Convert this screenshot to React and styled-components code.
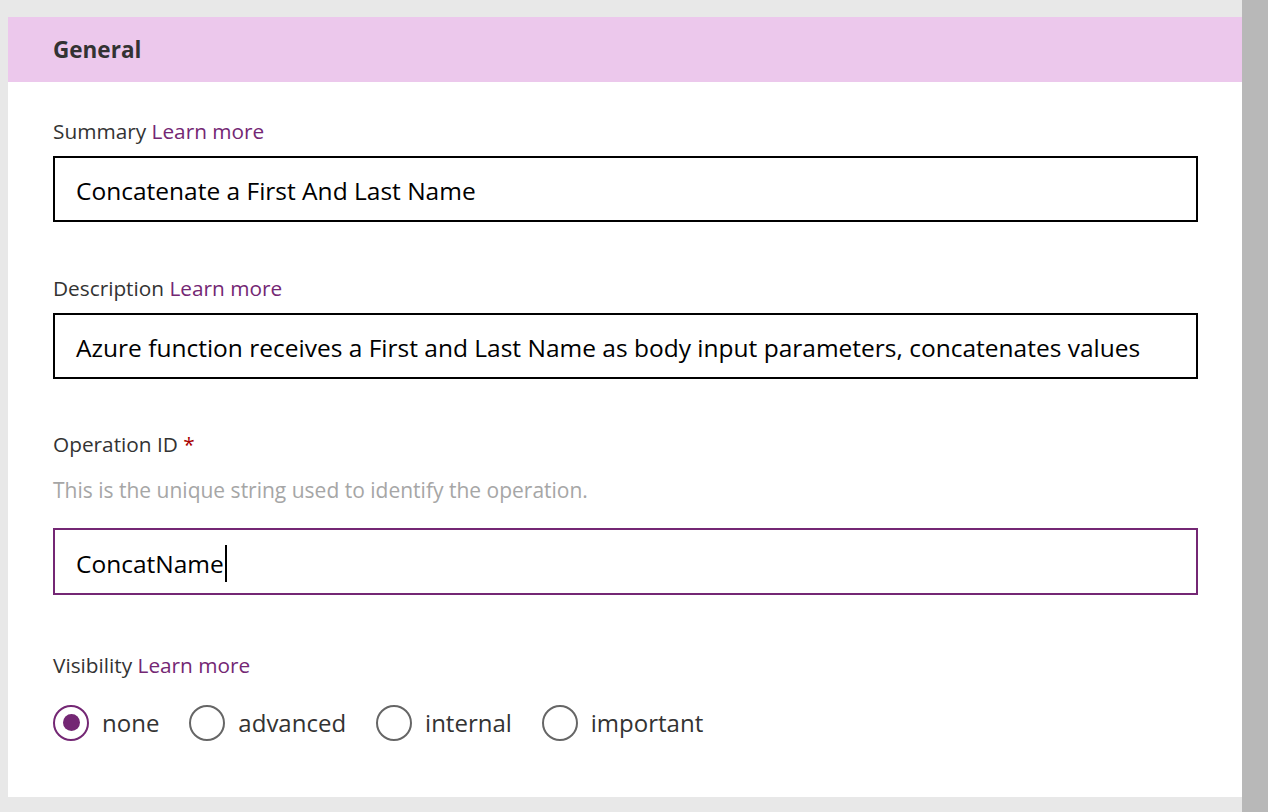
import React from "react";
import styled, { createGlobalStyle } from "styled-components";

const Global = createGlobalStyle`
  html, body { margin: 0; padding: 0; }
  body {
    background: #e8e8e8;
    font-family: "Open Sans", "Noto Sans", sans-serif;
    width: 1268px;
    height: 812px;
    overflow: hidden;
  }
`;

const Page = styled.div`
  display: flex;
  width: 1268px;
  height: 812px;
`;

const Main = styled.div`
  flex: 1;
  padding: 17px 0 0 8px;
  display: flex;
  flex-direction: column;
`;

const Scrollbar = styled.div`
  width: 26px;
  background: #b8b8b8;
`;

const Panel = styled.section`
  background: #ffffff;
  display: flex;
  flex-direction: column;
`;

const Header = styled.header`
  height: 65px;
  background: #ecc8ec;
  display: flex;
  align-items: center;
  padding-left: 45px;
  font-size: 22.5px;
  font-weight: 700;
  color: #333333;
`;

const Body = styled.div`
  padding: 37px 44px 56px 45px;
  display: flex;
  flex-direction: column;
`;

const Label = styled.div`
  height: 24px;
  line-height: 24px;
  font-size: 20.8px;
  color: #333333;
  margin-top: ${(p) => p.$top || 0}px;
  white-space: nowrap;
`;

const Link = styled.span`
  color: #742774;
`;

const Required = styled.span`
  color: #a80000;
`;

const Helper = styled.div`
  height: 24px;
  line-height: 24px;
  font-size: 21px;
  color: #a6a6a6;
  margin-top: 22px;
  white-space: nowrap;
`;

const Input = styled.div`
  margin-top: ${(p) => p.$top}px;
  height: ${(p) => p.$h || 66}px;
  box-sizing: border-box;
  border: 2px solid ${(p) => (p.$focused ? "#742774" : "#000000")};
  display: flex;
  align-items: center;
  padding: 3px 0 0 21px;
  font-size: 24.5px;
  color: #000000;
  white-space: nowrap;
  overflow: hidden;
`;

const Caret = styled.span`
  display: inline-block;
  width: 2px;
  height: 37px;
  background: #000;
  margin-left: 1px;
`;

const RadioGroup = styled.div`
  margin-top: 27px;
  display: flex;
  align-items: center;
  height: 37px;
`;

const RadioItem = styled.label`
  display: flex;
  align-items: center;
  margin-right: ${(p) => p.$mr}px;
  font-size: 24px;
  color: #333333;
`;

const Circle = styled.span`
  width: 36px;
  height: 36px;
  box-sizing: border-box;
  border-radius: 50%;
  border: 2px solid ${(p) => (p.$checked ? "#742774" : "#666666")};
  display: flex;
  align-items: center;
  justify-content: center;
  margin-right: 13px;
  &::after {
    content: "";
    display: ${(p) => (p.$checked ? "block" : "none")};
    width: 17px;
    height: 17px;
    border-radius: 50%;
    background: #742774;
  }
`;

const radios = [
  { label: "none", checked: true, mr: 30 },
  { label: "advanced", checked: false, mr: 30 },
  { label: "internal", checked: false, mr: 30 },
  { label: "important", checked: false, mr: 0 },
];

export default function App() {
  return (
    <>
      <Global />
      <Page>
        <Main>
          <Panel>
            <Header>General</Header>
            <Body>
              <Label>
                Summary <Link>Learn more</Link>
              </Label>
              <Input $top={13}>Concatenate a First And Last Name</Input>

              <Label $top={54}>
                Description <Link>Learn more</Link>
              </Label>
              <Input $top={13}>
                Azure function receives a First and Last Name as body input parameters, concatenates values
              </Input>

              <Label $top={53}>
                Operation ID <Required>*</Required>
              </Label>
              <Helper>This is the unique string used to identify the operation.</Helper>
              <Input $top={26} $h={67} $focused>
                ConcatName
                <Caret />
              </Input>

              <Label $top={58}>
                Visibility <Link>Learn more</Link>
              </Label>
              <RadioGroup>
                {radios.map((r) => (
                  <RadioItem key={r.label} $mr={r.mr}>
                    <Circle $checked={r.checked} />
                    {r.label}
                  </RadioItem>
                ))}
              </RadioGroup>
            </Body>
          </Panel>
        </Main>
        <Scrollbar />
      </Page>
    </>
  );
}
